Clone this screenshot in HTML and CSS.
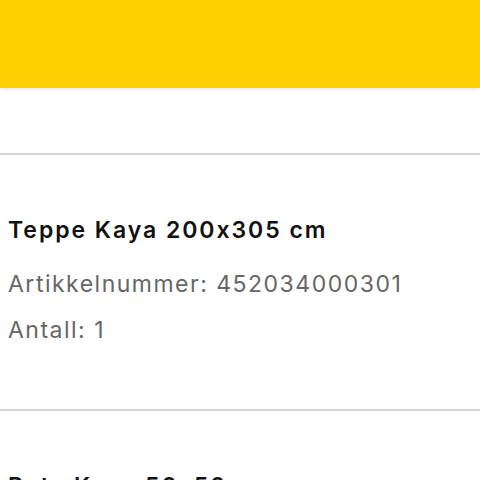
FILE: index.html
```html
<!DOCTYPE html>
<html>
<head>
  <meta charset="utf-8">
  <meta name="viewport" content="width=device-width, initial-scale=1">
  <title>Ordre</title>
  <link rel="stylesheet" href="styles.css">
</head>
<body>
<header class="topbar"></header>
<div class="toolbar"></div>
<main>
  <div class="item">
    <b class="name">Teppe Kaya 200x305 cm</b>
    <p class="meta">Artikkelnummer: 452034000301</p>
    <p class="meta">Antall: 1</p>
  </div>
  <div class="item">
    <b class="name">Pute Kaya 50x50 cm</b>
    <p class="meta">Artikkelnummer: 452034000302</p>
    <p class="meta">Antall: 2</p>
  </div>
</main>
</body>
</html>
```

FILE: styles.css
```css
html {
  font-size: 16px;
}

body {
  margin: 0;
  font-family: Inter, "Noto Sans", sans-serif;
  font-feature-settings: "calt" 0;
  background: #fff;
}

.topbar {
  height: 88px;
  background: #ffd000;
  box-shadow: 0 1px 4px rgba(0, 0, 0, 0.12);
}

.toolbar {
  height: 65px;
  border-bottom: 2px solid #d6d6d6;
}

.item {
  display: flex;
  flex-direction: column;
  gap: 14px;
  padding: 59px 8px 63px;
  border-bottom: 2px solid #d6d6d6;
}

.name {
  margin-bottom: 8px;
  font-size: 23px;
  line-height: 32px;
  font-weight: 600;
  letter-spacing: 0.085em;
  color: #111;
}

.meta {
  margin: 0;
  font-size: 23px;
  line-height: 32px;
  letter-spacing: 0.065em;
  color: #666;
}
```
